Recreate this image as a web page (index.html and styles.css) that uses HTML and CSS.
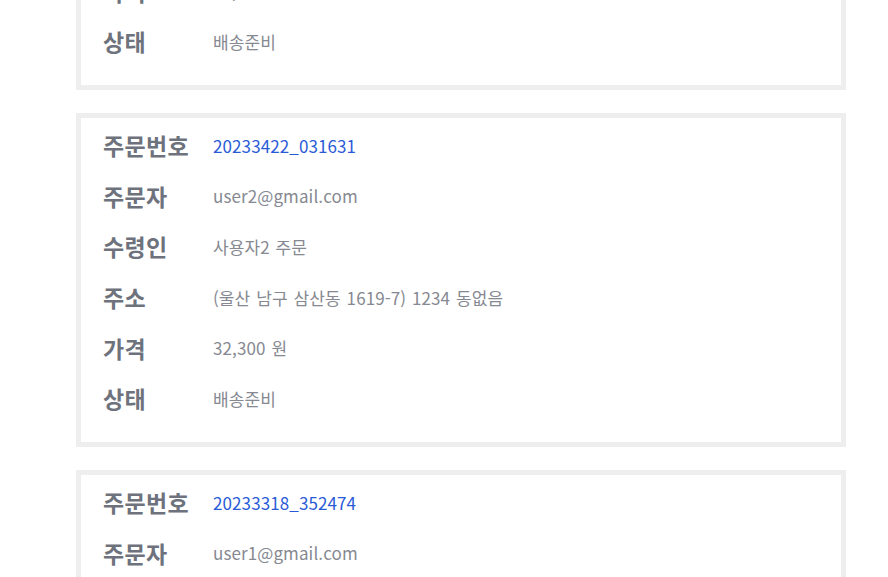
FILE: index.html
```html
<!DOCTYPE html>
<html lang="ko">
<head>
<meta charset="utf-8">
<link rel="stylesheet" href="styles.css">
</head>
<body>
<div class="list">
  <div class="card">
    <div class="row"><span class="label">주문번호</span><span class="value link">20233423_118204</span></div>
    <div class="row"><span class="label">주문자</span><span class="value">user3@gmail.com</span></div>
    <div class="row"><span class="label">수령인</span><span class="value">사용자3 주문</span></div>
    <div class="row"><span class="label">주소</span><span class="value">(울산 남구 삼산동 1619-7) 1234 동없음</span></div>
    <div class="row"><span class="label">가격</span><span class="value">18,900 원</span></div>
    <div class="row"><span class="label">상태</span><span class="value">배송준비</span></div>
  </div>
  <div class="card">
    <div class="row"><span class="label">주문번호</span><span class="value link">20233422_031631</span></div>
    <div class="row"><span class="label">주문자</span><span class="value">user2@gmail.com</span></div>
    <div class="row"><span class="label">수령인</span><span class="value">사용자2 주문</span></div>
    <div class="row"><span class="label">주소</span><span class="value">(울산 남구 삼산동 1619-7) 1234 동없음</span></div>
    <div class="row"><span class="label">가격</span><span class="value">32,300 원</span></div>
    <div class="row"><span class="label">상태</span><span class="value">배송준비</span></div>
  </div>
  <div class="card">
    <div class="row"><span class="label">주문번호</span><span class="value link">20233318_352474</span></div>
    <div class="row"><span class="label">주문자</span><span class="value">user1@gmail.com</span></div>
    <div class="row"><span class="label">수령인</span><span class="value">사용자1 주문</span></div>
    <div class="row"><span class="label">주소</span><span class="value">(울산 남구 삼산동 1619-7) 1234 동없음</span></div>
    <div class="row"><span class="label">가격</span><span class="value">25,000 원</span></div>
    <div class="row"><span class="label">상태</span><span class="value">배송준비</span></div>
  </div>
</div>
</body>
</html>
```
FILE: styles.css
```css
html, body {
  margin: 0;
  padding: 0;
  background: #fff;
  overflow: hidden;
}
body {
  font-family: "Noto Sans CJK KR", "Noto Sans", sans-serif;
}
.list {
  display: flex;
  flex-direction: column;
  gap: 23px;
  margin: -244px 42px 0 76px;
}
.card {
  border: 5px solid #eeeeee;
  padding: 2px 22px 18px;
  display: flex;
  flex-direction: column;
  height: 334px;
  box-sizing: border-box;
}
.row {
  height: 50.6px;
  display: flex;
  align-items: center;
}
.label {
  width: 110px;
  flex: none;
  font-size: 23px;
  font-weight: 700;
  letter-spacing: 0.3px;
  color: #6e727c;
}
.value {
  font-size: 17px;
  letter-spacing: 0.1px;
  word-spacing: 1px;
  color: #868991;
}
.value.link {
  color: #2a5bd7;
}
```
